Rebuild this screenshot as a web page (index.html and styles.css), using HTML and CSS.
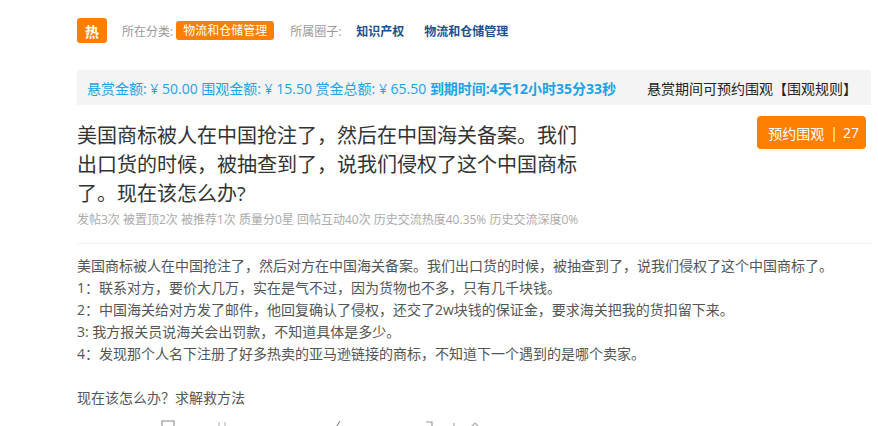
FILE: index.html
```html
<!DOCTYPE html>
<html lang="zh-CN">
<head>
  <meta charset="UTF-8" />
  <title>悬赏详情</title>
  <link rel="stylesheet" href="styles.css">
</head>
<body>
  <div class="page">

    <!-- 分类行 -->
    <div class="meta-row">
      <span class="hot">热</span>
      <span class="label">所在分类:</span>
      <span class="cat-tag">物流和仓储管理</span>
      <span class="label label-circle">所属圈子:</span>
      <a class="circle">知识产权</a>
      <a class="circle">物流和仓储管理</a>
    </div>

    <!-- 悬赏信息条 -->
    <div class="reward-bar">
      <span class="reward-info">悬赏金额: ¥ 50.00 围观金额: ¥ 15.50 赏金总额: ¥ 65.50 <b>到期时间:4天12小时35分33秒</b></span>
      <span class="reward-note">悬赏期间可预约围观【围观规则】</span>
    </div>

    <!-- 标题 -->
    <div class="head">
      <h1 class="title">美国商标被人在中国抢注了，然后在中国海关备案。我们出口货的时候，被抽查到了，说我们侵权了这个中国商标了。现在该怎么办?</h1>
      <button class="watch-btn">预约围观<span class="sep">|</span>27</button>
    </div>
    <p class="stats">发帖3次 被置顶2次 被推荐1次 质量分0星 回帖互动40次 历史交流热度40.35% 历史交流深度0%</p>

    <!-- 正文 -->
    <div class="content">
      <p>美国商标被人在中国抢注了，然后对方在中国海关备案。我们出口货的时候，被抽查到了，说我们侵权了这个中国商标了。</p>
      <p>1：联系对方，要价大几万，实在是气不过，因为货物也不多，只有几千块钱。</p>
      <p>2：中国海关给对方发了邮件，他回复确认了侵权，还交了2w块钱的保证金，要求海关把我的货扣留下来。</p>
      <p>3: 我方报关员说海关会出罚款，不知道具体是多少。</p>
      <p>4：发现那个人名下注册了好多热卖的亚马逊链接的商标，不知道下一个遇到的是哪个卖家。</p>
      <p>&nbsp;</p>
      <p>现在该怎么办？求解救方法</p>
    </div>

    <!-- 工具栏 -->
    <div class="toolbar">
      <svg class="ico ico-a" width="14" height="14" viewBox="0 0 14 14"><rect x="1" y="1" width="12" height="12" fill="none" stroke="#999" stroke-width="1.2"/></svg>
      <svg class="ico ico-b" width="14" height="14" viewBox="0 0 14 14"><path d="M4 2v10M10 2v10" stroke="#bbb" stroke-width="1.2"/></svg>
      <svg class="ico ico-c" width="14" height="14" viewBox="0 0 14 14"><path d="M11 1L4 12" stroke="#888" stroke-width="1.2"/></svg>
      <svg class="ico ico-d" width="14" height="14" viewBox="0 0 14 14"><path d="M3 2h6v10" fill="none" stroke="#999" stroke-width="1.2"/></svg>
      <svg class="ico ico-e" width="14" height="14" viewBox="0 0 14 14"><path d="M7 3v9" stroke="#aaa" stroke-width="1.2"/></svg>
      <svg class="ico ico-f" width="14" height="14" viewBox="0 0 14 14"><path d="M2 8l5-5 5 5" fill="none" stroke="#aaa" stroke-width="1.2"/></svg>
    </div>

  </div>
</body>
</html>
```

FILE: styles.css
```css
* {
  box-sizing: border-box;
}
body {
  margin: 0;
  background: #fff;
  font-family: "Open Sans", "Noto Sans CJK SC", sans-serif;
  color: #333;
}

.page {
  width: 794px;
  margin-left: 77px;
  padding-top: 18px;
}

/* 分类行 */
.meta-row {
  display: flex;
  align-items: center;
  height: 25px;
  font-size: 12px;
}
.hot {
  width: 30px;
  height: 25px;
  background: #ff7f00;
  color: #fff;
  border-radius: 3px;
  display: flex;
  align-items: center;
  justify-content: center;
  font-size: 14px;
  font-weight: 700;
  margin-right: 15px;
}
.label {
  color: #999;
}
.label-circle {
  margin-left: 16px;
  margin-right: 15px;
}
.cat-tag {
  background: #ff7f00;
  color: #fff;
  border-radius: 3px;
  padding: 1px 7px;
  margin-left: 3px;
  line-height: 17px;
}
.circle {
  color: #1e4f91;
  font-weight: 700;
  margin-right: 20px;
}

/* 悬赏信息条 */
.reward-bar {
  margin-top: 27px;
  height: 35px;
  background: #f4f4f4;
  display: flex;
  align-items: center;
  justify-content: space-between;
  padding: 0 14px 0 10px;
  font-size: 14px;
}
.reward-info {
  color: #1aa3e8;
}
.reward-info b {
  font-weight: 700;
}
.reward-note {
  color: #222;
}

/* 标题 */
.head {
  display: flex;
  justify-content: space-between;
  align-items: flex-start;
  margin-top: 11px;
}
.title {
  margin: 5px 0 0;
  width: 510px;
  font-size: 20px;
  line-height: 29px;
  font-weight: 400;
  color: #333;
}
.watch-btn {
  margin-right: 5px;
  height: 33px;
  padding: 0 7px 0 11px;
  white-space: nowrap;
  background: #ff7f00;
  color: #fff;
  border: none;
  border-radius: 4px;
  font-family: inherit;
  font-size: 14px;
  display: flex;
  align-items: center;
  justify-content: center;
}
.watch-btn .sep {
  margin: 0 5px 0 6px;
}
.stats {
  margin: 3px 0 0;
  font-size: 12px;
  color: #aaa;
  line-height: 18px;
}

/* 正文 */
.content {
  margin-top: 14px;
  border-top: 1px solid #f0f0f0;
  padding-top: 11px;
  font-size: 14px;
  color: #555;
}
.content p {
  margin: 0;
  line-height: 22px;
}

/* 工具栏 */
.toolbar {
  position: relative;
  height: 30px;
  margin-top: 11px;
}
.ico {
  position: absolute;
  top: 0;
}
.ico-a { left: 84px; }
.ico-b { left: 138px; }
.ico-c { left: 252px; }
.ico-d { left: 346px; }
.ico-e { left: 370px; }
.ico-f { left: 391px; }
```
